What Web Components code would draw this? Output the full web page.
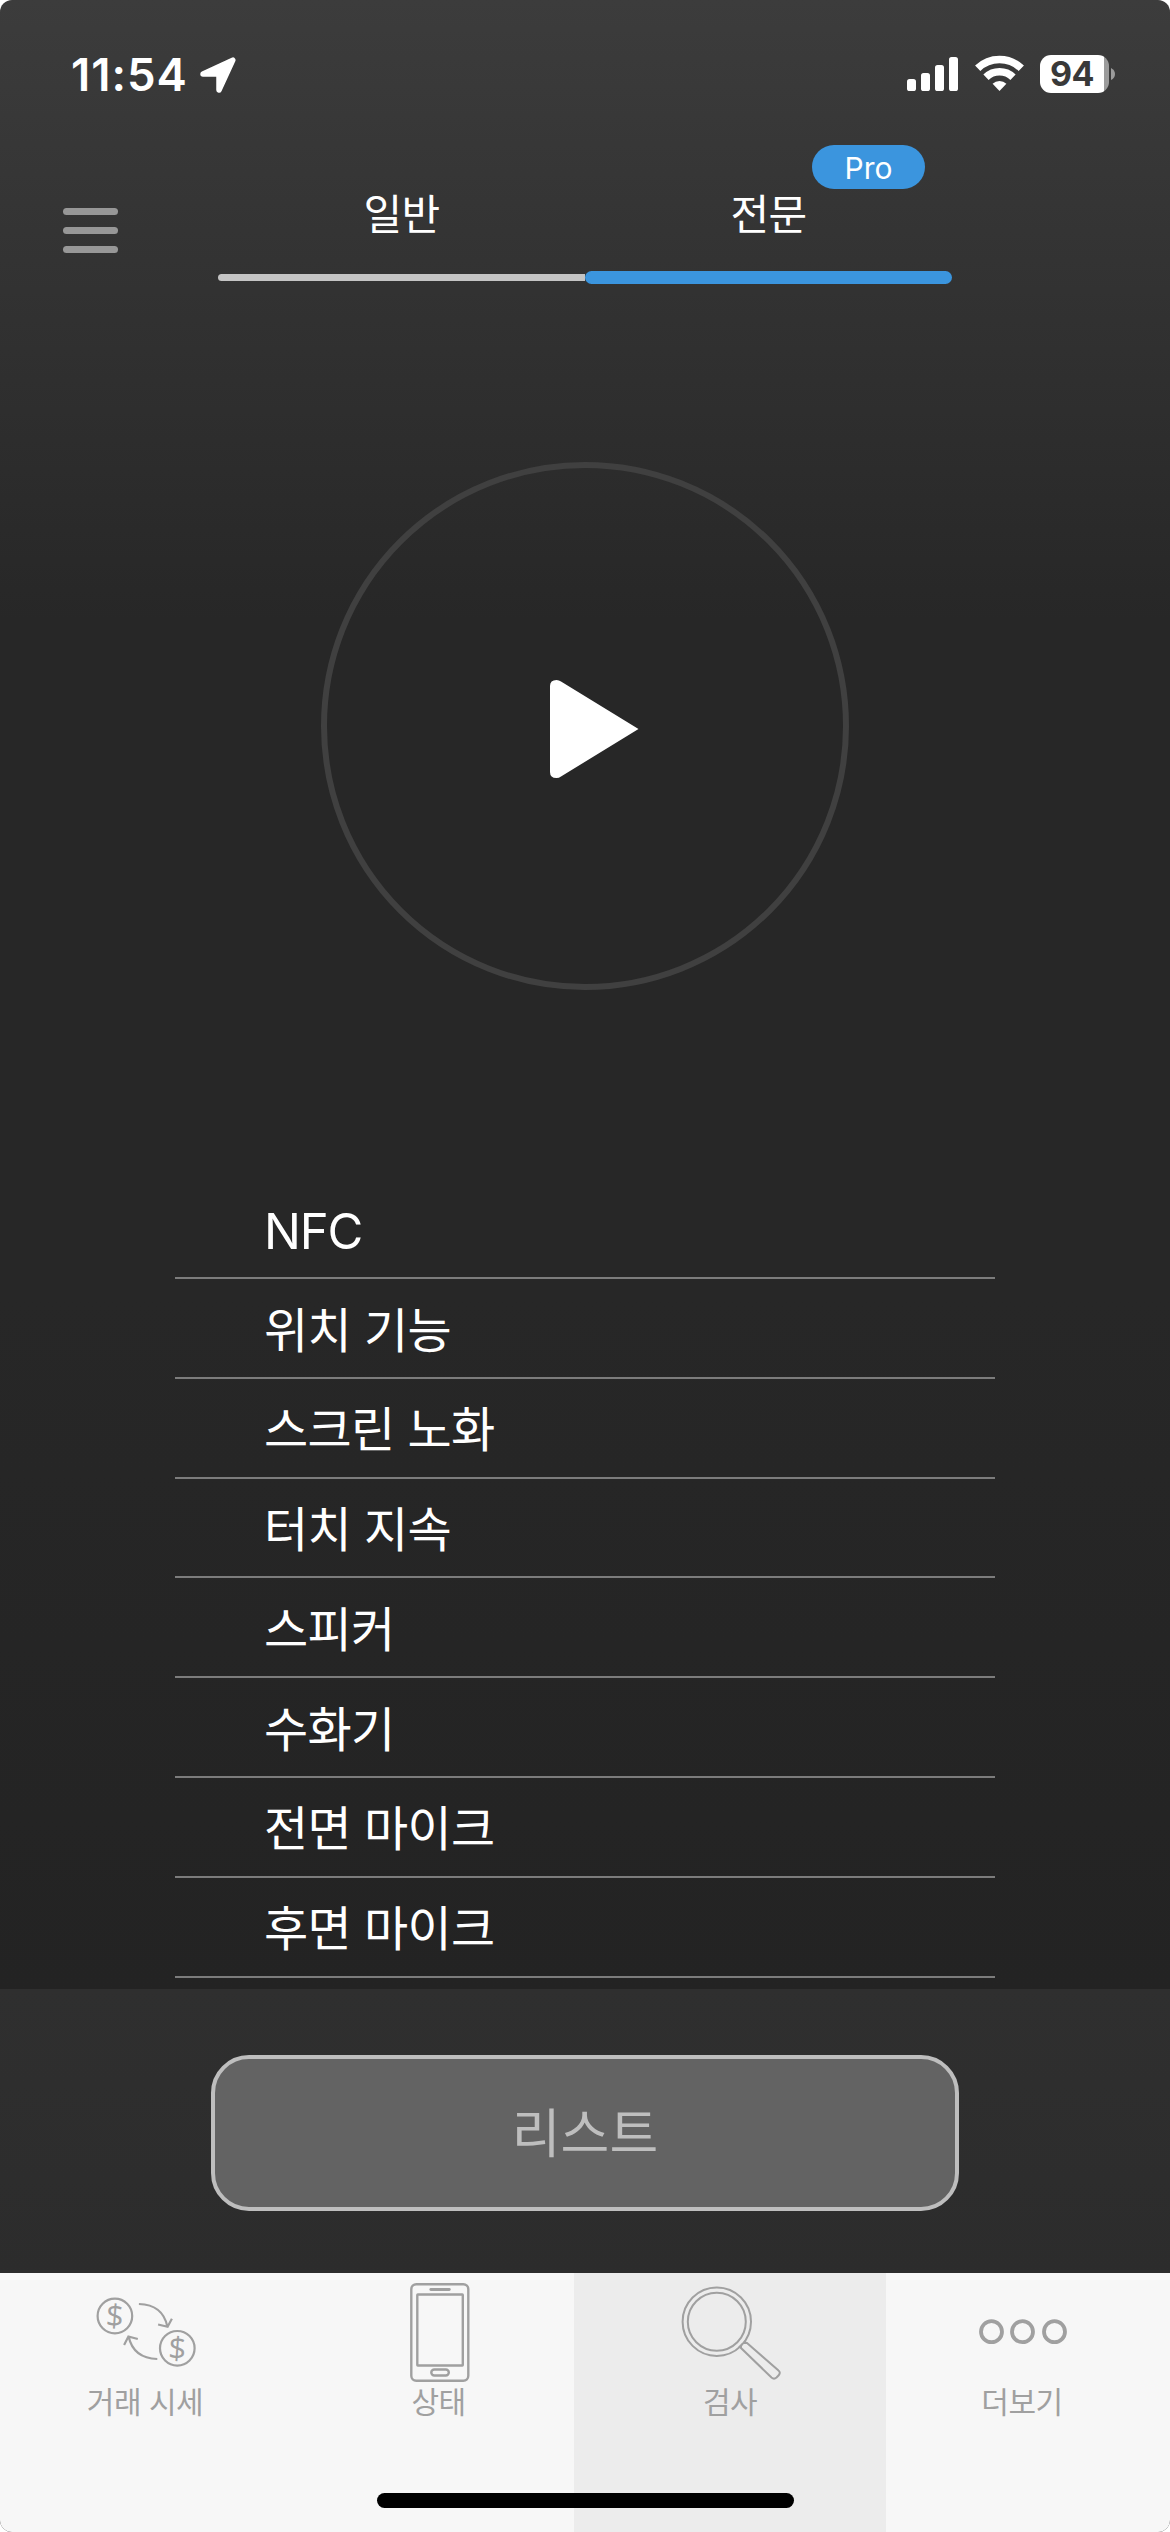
<!DOCTYPE html>
<html lang="ko">
<head>
<meta charset="utf-8">
<title>검사</title>
<style>
  html, body {
    margin: 0;
    background: #fff;
  }
  body {
    width: 1170px;
    height: 2532px;
    overflow: hidden;
    font-family: "Noto Sans CJK KR", "Noto Sans", sans-serif;
  }
</style>
</head>
<body>
<phone-screen>
  <status-bar time="11:54" battery="94"></status-bar>
  <mode-header>
    <mode-tab>일반</mode-tab>
    <mode-tab active badge="Pro">전문</mode-tab>
  </mode-header>
  <play-dial></play-dial>
  <check-list>
    <check-row lang="en">NFC</check-row>
    <check-row>위치 기능</check-row>
    <check-row>스크린 노화</check-row>
    <check-row>터치 지속</check-row>
    <check-row>스피커</check-row>
    <check-row>수화기</check-row>
    <check-row>전면 마이크</check-row>
    <check-row>후면 마이크</check-row>
  </check-list>
  <action-panel>리스트</action-panel>
  <tab-bar>
    <tab-item icon="exchange">거래 시세</tab-item>
    <tab-item icon="phone" style="padding-left: 13px">상태</tab-item>
    <tab-item icon="search" selected>검사</tab-item>
    <tab-item icon="more" style="padding-right: 12px">더보기</tab-item>
  </tab-bar>
</phone-screen>

<script>
class BaseElement extends HTMLElement {
    connectedCallback() {
        const shadowRoot = this.attachShadow({ mode: "open" });
        shadowRoot.innerHTML = this.render();
    }
}

class PhoneScreen extends BaseElement {
    render() {
        return `
          <style>
            :host {
              display: flex;
              flex-direction: column;
              width: 1170px;
              height: 2532px;
              border-radius: 12px;
              overflow: hidden;
              background: linear-gradient(#3c3c3c 0, #333 260px, #2d2d2d 440px, #272727 620px, #272727 1300px, #232323 1990px);
            }
          </style>
          <slot></slot>`;
    }
}

class StatusBar extends BaseElement {
    render() {
        return `
          <style>
            :host {
              display: flex;
              box-sizing: border-box;
              height: 145px;
              padding: 50px 55px 0 71px;
              align-items: flex-start;
              font-family: Inter, sans-serif;
              color: #fff;
            }
            .time {
              width: 129px;
              font-size: 45.5px;
              line-height: 50px;
              font-weight: 600;
              letter-spacing: 1px;
              white-space: nowrap;
            }
            .spacer {
              flex: 1;
            }
            svg {
              display: block;
            }
            .arrow { margin-top: 7px; }
            .signal { margin-top: 7px; }
            .wifi { margin: 5px 16px 0 17px; }
            .battery {
              display: flex;
              align-items: center;
              gap: 2px;
              margin-top: 5px;
            }
            .level {
              width: 69px;
              height: 38px;
              padding-right: 5px;
              box-sizing: border-box;
              border-radius: 11px;
              background: linear-gradient(90deg, #fff 64px, #9b9b9b 64px);
              color: #393939;
              font-size: 34px;
              line-height: 38px;
              font-weight: 700;
              letter-spacing: -.5px;
              text-align: center;
            }
          </style>
          <span class="time">${this.getAttribute("time")}</span>
          <svg class="arrow" width="36" height="36" viewBox="0 0 36 36">
            <path d="M3 17 32.800 3.200 19 33V17Z" fill="#fff" stroke="#fff" stroke-width="5.5" stroke-linejoin="round"/>
          </svg>
          <span class="spacer"></span>
          <svg class="signal" width="51" height="34" viewBox="0 0 51 34" fill="#fff">
            <rect x="0" y="22" width="9" height="12" rx="2.6"/>
            <rect x="14" y="16" width="9" height="18" rx="2.6"/>
            <rect x="28" y="8" width="9" height="26" rx="2.6"/>
            <rect x="42" y="0" width="9" height="34" rx="2.6"/>
          </svg>
          <svg class="wifi" width="49" height="36" viewBox="0 0 49 36">
            <g fill="none" stroke="#fff" stroke-width="7.6">
              <path d="M2.7 13.3A31.5 31.5 0 0 1 46.3 13.3"/>
              <path d="M11 22.2A19.5 19.5 0 0 1 38 22.2"/>
            </g>
            <path d="M24.500 36 17.600 28.800A10 10 0 0 1 31.400 28.800Z" fill="#fff"/>
          </svg>
          <div class="battery">
            <div class="level">${this.getAttribute("battery")}</div>
            <svg width="4" height="12" viewBox="0 0 4 12"><path d="M0 0Q4 2 4 6T0 12Z" fill="#9b9b9b"/></svg>
          </div>`;
    }
}

class ModeHeader extends BaseElement {
    render() {
        return `
          <style>
            :host {
              display: flex;
              height: 139px;
            }
            .menu {
              display: flex;
              flex-direction: column;
              gap: 12px;
              width: 55px;
              margin: 63px 100px 0 63px;
            }
            .menu i {
              height: 7px;
              border-radius: 3.5px;
              background: #979797;
            }
          </style>
          <div class="menu"><i></i><i></i><i></i></div>
          <slot></slot>`;
    }
}

class ModeTab extends BaseElement {
    render() {
        const badge = this.getAttribute("badge");
        return `
          <style>
            :host {
              position: relative;
              display: flex;
              flex-direction: column;
              width: 367px;
              align-items: center;
              color: #fff;
            }
            .label {
              margin-top: 37px;
              font-size: 42px;
              line-height: 60px;
              letter-spacing: -.6px;
            }
            .line {
              width: 100%;
              height: 7px;
              margin-top: 32px;
              border-radius: 3.5px 0 0 3.5px;
              background: #c4c4c4;
            }
            :host([active]) .line {
              height: 13px;
              margin-top: 29px;
              border-radius: 6.5px;
              background: #3b95de;
            }
            .badge {
              position: absolute;
              left: 227px;
              top: 0;
              width: 113px;
              height: 44px;
              border-radius: 22px;
              background: #3b95de;
              font: 400 30px/46px Inter, sans-serif;
              text-align: center;
            }
          </style>
          <span class="label"><slot></slot></span>
          <div class="line"></div>
          ${badge ? `<span class="badge">${badge}</span>` : ""}`;
    }
}

class PlayDial extends BaseElement {
    render() {
        return `
          <style>
            :host {
              display: flex;
              justify-content: center;
              height: 894px;
            }
            svg {
              width: 528px;
              height: 528px;
              margin-top: 178px;
            }
          </style>
          <svg viewBox="0 0 528 528">
            <circle cx="264" cy="264" r="261" fill="none" stroke="#404040" stroke-width="6"/>
            <path d="M229 224Q229 218 235.500 218Q238 218 240 219.500L317.500 267 240 314.500Q238 316 235.500 316Q229 316 229 310Z" fill="#fff"/>
          </svg>`;
    }
}

class CheckList extends BaseElement {
    render() {
        return `
          <style>
            :host {
              display: flex;
              flex-direction: column;
              height: 811px;
              margin: 0 175px;
              overflow: hidden;
            }
          </style>
          <slot></slot>`;
    }
}

class CheckRow extends BaseElement {
    render() {
        return `
          <style>
            :host {
              display: block;
              flex: none;
              box-sizing: border-box;
              height: 99.8px;
              padding: 11.5px 0 0 89px;
              border-bottom: 2px solid #7c7c7c;
              color: #fff;
              font-size: 48px;
              line-height: 72px;
              letter-spacing: -.6px;
              white-space: nowrap;
            }
            /* first row, Latin name */
            :host(:lang(en)) {
              height: 101px;
              padding-top: 18px;
              font-family: Inter, sans-serif;
              font-size: 49px;
              letter-spacing: -1.2px;
            }
          </style>
          <slot></slot>`;
    }
}

class ActionPanel extends BaseElement {
    render() {
        return `
          <style>
            :host {
              display: block;
              box-sizing: border-box;
              height: 284px;
              padding: 66px 211px 0;
              background: linear-gradient(#2f2f2f, #2c2c2c);
            }
            button {
              display: block;
              width: 748px;
              height: 156px;
              padding: 0;
              border: 4px solid #bebebe;
              border-radius: 38px;
              background: #636363;
              color: #bebebe;
              font: inherit;
              font-size: 53px;
              line-height: 142px;
              padding-bottom: 6px;
            }
          </style>
          <button><slot></slot></button>`;
    }
}

class TabBar extends BaseElement {
    render() {
        return `
          <style>
            :host {
              position: relative;
              display: grid;
              grid-template-columns: 290px 284px 312px 284px;
              height: 259px;
              background: #f7f7f7;
            }
            .home {
              position: absolute;
              left: 377px;
              bottom: 24px;
              width: 417px;
              height: 15px;
              border-radius: 7.5px;
              background: #000;
            }
          </style>
          <slot></slot>
          <div class="home"></div>`;
    }
}

const icons = {
    exchange: `
      <g transform="translate(.6 1)" fill="none" stroke="#a0a0a0" stroke-width="2.2">
        <circle cx="19.300" cy="34" r="17.300"/>
        <circle cx="81.700" cy="66.300" r="17.300"/>
        <path d="M43.300 22C60 22.500 69 31 71.700 44.500M62.500 42.500 72 44.700 76.300 36.800"/>
        <path d="M61.700 77C45 76.500 36 68 33 54.500M42.200 57 32.800 54.500 28.500 63"/>
      </g>
      <g fill="#a0a0a0" font-family="Open Sans, sans-serif" font-size="31" text-anchor="middle">
        <text x="19.900" y="46" transform="rotate(4 19.900 35)">$</text>
        <text x="82.300" y="78.300" transform="rotate(4 82.300 67.300)">$</text>
      </g>`,
    phone: `
      <g transform="translate(1.800 1)" fill="none" stroke="#a0a0a0" stroke-width="2.400">
        <rect x="21.500" y="2.200" width="57" height="96.600" rx="5"/>
        <rect x="27.500" y="12.500" width="45.500" height="71" rx=".5"/>
        <rect x="41.500" y="87.500" width="17.500" height="6" rx="3"/>
        <path d="M41 7.500H59.500" stroke-width="2.800" stroke-linecap="round"/>
      </g>`,
    search: `
      <g fill="none" stroke="#a0a0a0" stroke-width="2">
        <circle cx="36.800" cy="40.700" r="34.200"/>
        <circle cx="36.800" cy="40.700" r="29"/>
        <path d="M59 66.500 61 64.500V67L91.500 96.500Q94 98.800 96.500 96.500L98.700 94.300Q101 91.500 98.500 89.500L67 62H64.300L65.500 59.500"/>
      </g>`,
    more: `
      <g fill="none" stroke="#a0a0a0" stroke-width="3.800">
        <circle cx="19.500" cy="50.700" r="10.500"/>
        <circle cx="50.500" cy="50.700" r="10.500"/>
        <circle cx="82.500" cy="50.700" r="10.500"/>
      </g>`
};

class TabItem extends BaseElement {
    render() {
        return `
          <style>
            :host {
              display: flex;
              flex-direction: column;
              box-sizing: border-box;
              align-items: center;
              padding-top: 8px;
              color: #a0a0a0;
              font-size: 30px;
              line-height: 44px;
              letter-spacing: -.5px;
            }
            :host([selected]) {
              background: #ececec;
            }
            svg {
              width: 101px;
              height: 101px;
              margin-bottom: -4px;
              overflow: visible;
              letter-spacing: 0;
            }
          </style>
          <svg viewBox="0 0 101 101">${icons[this.getAttribute("icon")]}</svg>
          <span><slot></slot></span>`;
    }
}

window.customElements.define("phone-screen", PhoneScreen);
window.customElements.define("status-bar", StatusBar);
window.customElements.define("mode-header", ModeHeader);
window.customElements.define("mode-tab", ModeTab);
window.customElements.define("play-dial", PlayDial);
window.customElements.define("check-list", CheckList);
window.customElements.define("check-row", CheckRow);
window.customElements.define("action-panel", ActionPanel);
window.customElements.define("tab-bar", TabBar);
window.customElements.define("tab-item", TabItem);
</script>
</body>
</html>
